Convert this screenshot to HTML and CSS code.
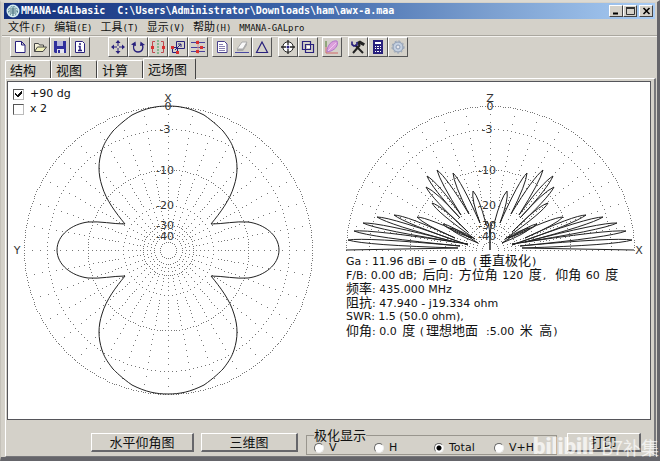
FILE: index.html
```html
<!DOCTYPE html>
<html lang="zh-CN">
<head>
<meta charset="utf-8">
<title>MMANA-GALbasic</title>
<link rel="stylesheet" href="styles.css">
</head>
<body>
<div class="window">
  <header class="titlebar">
    <svg class="app-icon" viewBox="0 0 14 14"><circle cx="7" cy="7" r="6.5" fill="#d8eef0"/><circle cx="7" cy="7" r="4.5" fill="none" stroke="#50808c" stroke-dasharray="2 1"/><path d="M4 5h6M4 9h6M7 3v8M3 7h8" stroke="#48707c"/></svg>
    <h1 class="title">MMANA-GALbasic&nbsp; C:\Users\Administrator\Downloads\ham\awx-a.maa</h1>
    <div class="win-buttons">
      <button aria-label="最小化"><svg viewBox="0 0 9 8"><path d="M1 6.5h5" stroke="#000" stroke-width="2"/></svg></button>
      <button aria-label="最大化"><svg viewBox="0 0 9 8"><path d="M.5 1v6.500h8V1" fill="none" stroke="#333"/><path d="M0 1h9" stroke="#333" stroke-width="2"/></svg></button>
      <button class="close" aria-label="关闭"><svg viewBox="0 0 9 8"><path d="M1.500 1l6 6M7.500 1l-6 6" stroke="#000" stroke-width="1.600"/></svg></button>
    </div>
  </header>

  <nav class="menubar">
    <button>文件<span class="mono">(F)</span></button>
    <button>编辑<span class="mono">(E)</span></button>
    <button>工具<span class="mono">(T)</span></button>
    <button>显示<span class="mono">(V)</span></button>
    <button>帮助<span class="mono">(H)</span></button>
    <button><span class="mono">MMANA-GALpro</span></button>
  </nav>

  <div class="toolbar">
    <div class="group first">
      <button aria-label="新建"><svg viewBox="0 0 14 14"><path d="M2.500 1.500h6l3.500 3.500v7.500h-9.500zM8.500 1.500v3.500h3.500" fill="#fff" stroke="#28207c"/></svg></button>
      <button aria-label="打开"><svg viewBox="0 0 14 14"><path d="M1.500 11.500v-8h4l1 1.500h4v2" fill="#f4f0d8" stroke="#444"/><path d="M1.500 11.500l3-4.500h9l-3.500 4.500z" fill="#f0f0b8" stroke="#444"/></svg></button>
      <button aria-label="保存"><svg viewBox="0 0 14 14"><path d="M1 1h12v12H2l-1-1z" fill="#30309c"/><path d="M4 1h6v5H4z" fill="#b8b8d8"/><path d="M4 9h7v4H4z" fill="#e4e4f0"/><path d="M5 10h2v3H5z" fill="#30309c"/></svg></button>
      <button aria-label="信息"><svg viewBox="0 0 14 14"><path d="M2.500 1.500h7l2 2v9h-9z" fill="#fff" stroke="#28207c"/><path d="M7 3v2M5.500 6.500H7V10M5 10.500h4" fill="none" stroke="#28207c" stroke-width="1.500"/></svg></button>
    </div>
    <div class="group">
      <button aria-label="移动"><svg viewBox="0 0 14 14"><path d="M7 0l2.500 3h-5zM7 14l2.500-3h-5zM0 7l3-2.500v5zM14 7l-3-2.500v5z" fill="#28207c"/><path d="M7 2v4M7 8v4M2 7h4M8 7h4" stroke="#28207c"/></svg></button>
      <button aria-label="旋转"><svg viewBox="0 0 14 14"><path d="M3.500 4C1.500 7 2.500 12 7 12s6-4 4-8" fill="none" stroke="#28207c" stroke-width="1.400"/><path d="M0 4.500l4.500-3 .5 4.500zM14 5L9.500 1.500 9 6z" fill="#28207c"/></svg></button>
      <button aria-label="镜像"><svg viewBox="0 0 14 14"><path d="M4 1.500H1.500v11H4M10 1.500h2.500v11H10" fill="none" stroke="#c04850"/><path d="M7 0v14" stroke="#38a058" stroke-dasharray="2 1"/><path d="M0 6h3v3H0zM11 6h3v3h-3z" fill="#d83030"/></svg></button>
      <button aria-label="缩放"><svg viewBox="0 0 14 14"><path d="M5.500 1.500h8v7h-8zM1.500 7.500h5v5h-5z" fill="none" stroke="#28207c"/><path d="M4 10l6-6M7 4h3v3" fill="none" stroke="#28207c"/><path d="M0 6h3v3H0zM5 11h3v3H5z" fill="#d83030"/></svg></button>
      <button aria-label="导线"><svg viewBox="0 0 14 14"><path d="M0 2.500h14M0 7.500h14M0 11.500h14" stroke="#48409c"/><path d="M7 0v14" stroke="#d89090"/><path d="M5 1h3v3H5zM9 6h3v3H9zM5 10h3v3H5z" fill="#d83030"/></svg></button>
    </div>
    <div class="group">
      <button aria-label="文档"><svg viewBox="0 0 14 14"><path d="M2.500 1.500h7l2.500 2.500v8.500h-9.500z" fill="#fff" stroke="#48408c"/><path d="M4 4.500h4M4 6.500h6M4 8.500h6M4 10.500h6" stroke="#8880b0"/></svg></button>
      <button aria-label="擦除"><svg viewBox="0 0 14 14"><path d="M2 9l5-7h5L8 9z" fill="#f8f8f8" stroke="#aaa"/><path d="M2 9v2h6l4-6V2L8 9z" fill="#aaa"/><path d="M0 12.500h14" stroke="#4848a0"/></svg></button>
      <button aria-label="三角"><svg viewBox="0 0 14 14"><path d="M7 2l5.500 10.500h-11z" fill="none" stroke="#28207c" stroke-width="1.200"/></svg></button>
    </div>
    <div class="group">
      <button aria-label="瞄准"><svg viewBox="0 0 14 14"><circle cx="7" cy="7" r="5.200" fill="#fff" stroke="#222"/><path d="M7 0v5M7 9v5M0 7h5M9 7h5" stroke="#222" stroke-width="1.300"/><circle cx="7" cy="7" r="1.500" fill="#28207c"/></svg></button>
      <button aria-label="复制"><svg viewBox="0 0 14 14"><path d="M1.500 1.500h8v8h-8zM4.500 4.500h8v8h-8z" fill="none" stroke="#28207c" stroke-width="1.200"/><path d="M6 6h3v2H6z" fill="#fff"/></svg></button>
    </div>
    <div class="group">
      <button aria-label="方向图"><svg viewBox="0 0 14 14"><path d="M1 1v12h12" fill="none" stroke="#d06868"/><path d="M2 12C2 5 7 0 12 1c2 4-2 10-10 11z" fill="#dca0dc" stroke="#b078c8"/><path d="M3 11l8-8" stroke="#f0c8f0"/><path d="M1 1v6" stroke="#50b060"/></svg></button>
    </div>
    <div class="group">
      <button aria-label="设置"><svg viewBox="0 0 14 14"><path d="M2 13l7-8M4 5l8 8" stroke="#222" stroke-width="2"/><path d="M6 2l3-1.500 5 3-1.500 2.500-3-1.500-2 1z" fill="#222"/><path d="M1 1.500v3L3 6l3-1V2" fill="none" stroke="#28207c" stroke-width="1.600"/></svg></button>
      <button aria-label="计算器"><svg viewBox="0 0 14 14"><path d="M2 0h10v14H2z" fill="#28207c"/><path d="M4 2h6v2H4zM4 6h1v1H4zM6 6h2v1H6zM9 6h1v1H9zM4 8h1v1H4zM6 8h2v1H6zM9 8h1v1H9zM4 11h1v1H4zM6 11h2v1H6zM9 11h1v1H9z" fill="#fff"/></svg></button>
      <button aria-label="选项"><svg viewBox="0 0 14 14"><circle cx="7" cy="7" r="5" fill="#c4d0e0" stroke="#8c9cb4"/><circle cx="7" cy="7" r="6" fill="none" stroke="#8c9cb4" stroke-dasharray="2 2"/><circle cx="7" cy="7" r="2" fill="#e8e8ec" stroke="#8c9cb4"/></svg></button>
    </div>
  </div>

  <div class="tabs" role="tablist">
    <button role="tab">结构</button>
    <button role="tab">视图</button>
    <button role="tab">计算</button>
    <button role="tab" class="active" aria-selected="true">远场图</button>
  </div>

  <main class="page">
    <section class="plots">
      <div class="azimuth">
        <div class="options">
          <label><input type="checkbox" checked>+90 dg</label>
          <label><input type="checkbox">x 2</label>
        </div>
        <svg class="plot" id="azimuth" viewBox="-155 -158 310 306" width="310" height="306">
          <path class="grid"/>
          <path class="trace" d="M0-144C-12-144-22-142-36-135C-46-128-52-122-55-119C-62-110-64-106-66-100C-70-88-70-76-66-64C-62-50-52-37-43-26C-55-26-68-29-80-28C-96-26-111-15-111 0C-111 15-96 26-80 28C-68 29-55 26-43 26C-52 37-62 50-66 64C-70 76-70 88-66 100C-64 106-62 110-55 119C-52 122-46 128-36 135C-22 142-12 144 0 144C12 144 22 142 36 135C46 128 52 122 55 119C62 110 64 106 66 100C70 88 70 76 66 64C62 50 52 37 43 26C55 26 68 29 80 28C96 26 111 15 111 0C111-15 96-26 80-28C68-29 55-26 43-26C52-37 62-50 66-64C70-76 70-88 66-100C64-106 62-110 55-119C52-122 46-128 36-135C22-142 12-144 0-144Z"/>
          <text x="0" y="-148">X</text><text x="-151" y="4">Y</text>
          <g class="scale"></g>
        </svg>
      </div>
      <div class="elevation">
        <svg class="plot" id="elevation" viewBox="-144 -158 303 162" width="303" height="162">
          <path class="grid"/>
          <path class="trace"/>
          <text x="0" y="-148">Z</text><text x="149" y="4">X</text>
          <g class="scale"></g>
        </svg>
        <div class="results">
          <p>Ga : 11.96 dBi = 0 dB&nbsp; (<span>垂直极化</span>)</p>
          <p>F/B: 0.00 dB; <span>后向</span>: <span>方位角</span> 120 <span>度</span>,&nbsp; <span>仰角</span> 60 <span>度</span></p>
          <p><span class="lead">频率</span>: 435.000 MHz</p>
          <p><span class="lead">阻抗</span>: 47.940 - j19.334 ohm</p>
          <p>SWR: 1.5 (50.0 ohm),</p>
          <p><span class="lead">仰角</span>: 0.0 <span>度</span> (<span>理想地面</span>&nbsp; :5.00 <span>米</span> <span>高</span>)</p>
        </div>
      </div>
    </section>

    <footer class="actions">
      <button class="push level">水平仰角图</button>
      <button class="push three-d">三维图</button>
      <fieldset>
        <legend>极化显示</legend>
        <label><input type="radio" name="pol">V</label>
        <label><input type="radio" name="pol">H</label>
        <label><input type="radio" name="pol" checked>Total</label>
        <label><input type="radio" name="pol">V+H</label>
      </fieldset>
      <button class="push print">打印</button>
    </footer>
  </main>
  <div class="watermark">
    <span class="brand">bilibili</span><span>B7补集</span>
  </div>
</div>
<script src="plots.js"></script>
</body>
</html>
```

FILE: styles.css
```css
* { box-sizing: border-box; }

body {
  margin: 0;
  background: #55555a;
  color: #111;
  font: 11px/14px "DejaVu Sans", "Noto Sans CJK SC", sans-serif;
}

button { font: inherit; color: inherit; padding: 0; background: #d4d1c9; border: 0; }
svg { display: block; }

.window {
  position: relative;
  display: flex;
  flex-direction: column;
  min-height: 100vh;
  padding: 1px 0 0 1px;
  border: solid;
  border-width: 2px 3px 4px 1px;
  border-color: #dddad2 #65656a #65656a #c4c1b9;
  background: #d4d1c9;
}

.titlebar {
  display: flex;
  align-items: center;
  height: 16px;
  margin: 0 2px;
  padding: 0 2px;
  background: linear-gradient(90deg, #14307c, #3c64a8 45%, #7ca0d0 75%, #a8ccf4);
}
.app-icon { width: 14px; height: 14px; }
.title {
  flex: 1;
  margin: 0;
  padding-left: 1px;
  color: #fff;
  font: bold 10px/14px "DejaVu Sans Mono", monospace;
  white-space: nowrap;
}
.win-buttons { display: flex; }
.win-buttons button {
  display: grid;
  place-items: center;
  width: 14px;
  height: 12px;
  border: 1px solid;
  border-color: #fff #444 #444 #fff;
}
.win-buttons svg { width: 9px; height: 8px; }
.win-buttons .close { margin-left: 2px; }

.menubar {
  display: flex;
  gap: 8px;
  height: 17px;
  padding: 0 6px;
  border-bottom: 1px solid #aaa79f;
}
.menubar button { font: 11px/15px "Noto Sans CJK SC", sans-serif; white-space: nowrap; }
.menubar .mono { font: 9px/15px "DejaVu Sans Mono", monospace; }

.toolbar {
  display: flex;
  height: 23px;
  padding: 0 8px;
  border-top: 1px solid #f4f2ee;
}
.group { display: flex; margin-right: 4px; }
.group.first { margin-right: 18px; }
.group:nth-child(3), .group:nth-child(5) { margin-right: 6px; }
.group button {
  display: grid;
  place-items: center;
  width: 20px;
  height: 20px;
  border: 1px solid;
  border-color: #fff #555 #555 #fff;
}
.group svg { width: 14px; height: 14px; }

.tabs {
  display: flex;
  align-items: flex-end;
  height: 19px;
  padding-left: 3px;
}
.tabs button {
  height: 18px;
  width: 46px;
  padding-left: 4px;
  text-align: left;
  font: 13px/14px "Noto Sans CJK SC", sans-serif;
  border: 1px solid;
  border-color: #fff #444 transparent #fff;
  border-bottom: 0;
  border-radius: 2px 2px 0 0;
}
.tabs .active { width: 53px; height: 21px; margin-bottom: -1px; z-index: 1; }

.page {
  flex: 1;
  display: flex;
  flex-direction: column;
  margin: 0 1px 0 3px;
  padding: 2px 3px 0 1px;
  border: solid;
  border-width: 1px 2px 1px 1px;
  border-color: #fff #77777a #77777a #fff;
}

.plots {
  flex: 1;
  display: flex;
  align-items: flex-start;
  justify-content: space-between;
  padding: 10px 1px 19px 5px;
  border: 1px solid #55555a;
  background: #fff;
}
.azimuth { position: relative; }
.options {
  position: absolute;
  top: -5px;
  left: 0;
  display: grid;
  gap: 1px;
}
.options label { display: flex; align-items: center; gap: 6px; height: 14px; }
.options input {
  appearance: none;
  width: 11px;
  height: 11px;
  margin: 0;
  border: 1px solid;
  border-color: #555 #bbb #bbb #555;
  background: #fff;
}
.options input:checked {
  background:
    linear-gradient(45deg, transparent 35%, #111 35% 62%, transparent 62%) 1px 3px / 4px 4px no-repeat,
    linear-gradient(-45deg, transparent 35%, #111 35% 62%, transparent 62%) 3px 1px / 5px 6px no-repeat,
    #fff;
}

.plot text { font-size: 11px; text-anchor: middle; fill: #333; }
.plot .grid { fill: #777; shape-rendering: crispEdges; }
.plot .trace { fill: none; stroke: #222; stroke-width: 1; stroke-linejoin: round; }

.results p { height: 14px; margin: 0; white-space: nowrap; line-height: 14px; }
.results span { margin: 0 1px 0 2px; font: 13px/12px "Noto Sans CJK SC", sans-serif; }
.results .lead { margin: 0; }

.actions {
  display: flex;
  align-items: flex-end;
  height: 36px;
  padding: 0 10px 1px 84px;
}
.push {
  height: 19px;
  margin-bottom: 3px;
  font: 13px/16px "Noto Sans CJK SC", sans-serif;
  border: solid;
  border-width: 1px 2px 2px 1px;
  border-color: #fff #66666a #66666a #fff;
}
.level { width: 103px; margin-right: 7px; }
.three-d { width: 97px; margin-right: 8px; }
.print { flex: 1; max-width: 160px; margin-left: 10px; }

fieldset {
  display: grid;
  grid-template-columns: repeat(4, 60px);
  width: 251px;
  height: 27px;
  margin: 0;
  padding: 0 0 0 7px;
  border: 1px solid #99968e;
}
legend { padding: 0; font: 13px/14px "Noto Sans CJK SC", sans-serif; }
fieldset label { display: flex; align-items: center; gap: 5px; height: 11px; white-space: nowrap; }
fieldset input {
  appearance: none;
  width: 10px;
  height: 10px;
  margin: 0;
  border: 1px solid;
  border-color: #666 #eee #eee #666;
  border-radius: 50%;
  background: #fff;
}
fieldset input:checked { background: radial-gradient(circle, #000 2px, #fff 3px); }

.watermark {
  position: absolute;
  right: -2px;
  bottom: -4px;
  display: flex;
  align-items: center;
  gap: 7px;
  color: #fff;
  opacity: .7;
  font: 18px/28px "Noto Sans CJK SC", sans-serif;
  pointer-events: none;
}
.brand { font: 900 22px/28px Roboto, sans-serif; }
```

FILE: plots.js
```js
const RADIUS = 144;
const radiusAt = (db) => RADIUS * Math.pow(0.89, db / 2);

function drawGrid(svg, from, to) {
  const dots = new Set();
  const add = (r, deg) => {
    const a = deg * Math.PI / 180;
    dots.add(Math.round(r * Math.cos(a)) + " " + Math.round(-r * Math.sin(a)));
  };
  const rings = [[0, 1], [3, 2], [10, 2], [20, 5], [30, 5], [40, 10], [50, 15]];
  for (const [db, step] of rings)
    for (let a = from; a <= to; a += step) add(radiusAt(db), a);
  for (let a = from; a <= to; a += 10) {
    let last = Infinity;
    for (let db = 0; db <= 40; db++) {
      const r = radiusAt(db);
      if (last - r < 3) continue;
      add(r, a);
      last = r;
    }
  }
  svg.querySelector(".grid").setAttribute("d",
    [...dots].map((p) => `M${p}h1v1h-1z`).join(""));

  const scale = svg.querySelector(".scale");
  for (const db of [0, 3, 10, 20, 30, 40]) {
    const t = document.createElementNS("http://www.w3.org/2000/svg", "text");
    t.setAttribute("x", db ? -3 : 0);
    t.setAttribute("y", Math.round(4 - radiusAt(db)));
    t.textContent = db ? "-" + db : "0";
    scale.append(t);
  }
}

/* Tip and following null of each elevation lobe, for one side of the plot. */
const lobes = [
  [142, 10, 30, 4], [136, 19, 22, 6], [127, 27, 35, 8], [113, 33, 22, 5],
  [96, 35, 35, 12], [73, 33, 18, 12], [47, 26, 12, 7], [40, 22, 15, 11],
  [58, 47, 22, 18], [64, 63, 30, 32], [63, 74, 29, 35], [53, 80, 21, 36],
  [37, 77, 10, 27], [17, 59, 4, 26], [3, 29, 0, 0]
];

function lobePath(side) {
  let d = `M${side * 144} 0L${side * 32} -2`;
  for (const [tx, ty, nx, ny] of lobes) {
    const len = Math.hypot(tx, ty);
    const w = len > 60 ? 4 : 3;
    const ox = ty / len * w, oy = tx / len * w;
    d += `Q${side * (tx * .88 + ox)} ${-(ty * .88 - oy)} ${side * tx} ${-ty}`;
    d += `Q${side * (tx * .88 - ox)} ${-(ty * .88 + oy)} ${side * nx} ${-ny}`;
  }
  return d;
}

drawGrid(document.getElementById("azimuth"), 0, 359);
const elevation = document.getElementById("elevation");
drawGrid(elevation, 0, 180);
elevation.querySelector(".trace").setAttribute("d", lobePath(-1) + lobePath(1));
```
